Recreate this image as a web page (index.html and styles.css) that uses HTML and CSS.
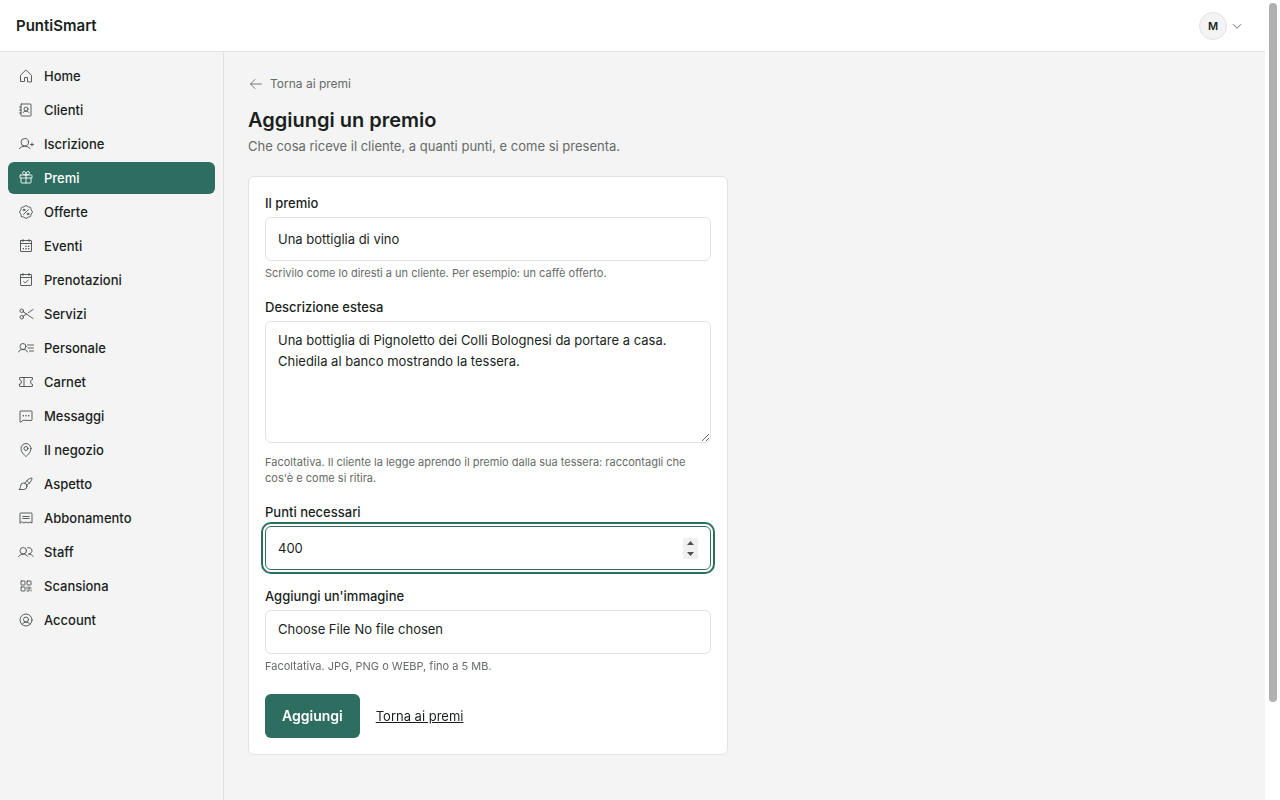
FILE: index.html
```html
<!DOCTYPE html>
<html lang="it">
<head>
	<meta charset="utf-8">
	<meta name="viewport" content="width=device-width, initial-scale=1">
	<title>Aggiungi un premio - PuntiSmart</title>
	<link rel="stylesheet" href="styles.css">
</head>
<body>
	<div class="page">
		<header class="topbar">
			<a href="#" class="brand">PuntiSmart</a>
			<button type="button" class="account-menu" aria-label="Menu account">
				<span class="avatar">M</span>
				<svg class="caret" viewBox="0 0 256 256"><path d="M208 96l-80 80-80-80"/></svg>
			</button>
		</header>

		<div class="shell">
			<nav class="sidebar">
				<a href="#" class="nav-item">
					<svg class="icon" viewBox="0 0 256 256"><path d="M152 216v-64h-48v64H40v-96a8 8 0 0 1 2.34-5.66l80-80a8 8 0 0 1 11.32 0l80 80A8 8 0 0 1 216 120v96Z"/></svg>
					Home
				</a>
				<a href="#" class="nav-item">
					<svg class="icon" viewBox="0 0 256 256"><rect x="48" y="32" width="160" height="192" rx="8"/><circle cx="128" cy="112" r="32"/><path d="M80 168a60 60 0 0 1 96 0M24 80h24M24 128h24M24 176h24"/></svg>
					Clienti
				</a>
				<a href="#" class="nav-item">
					<svg class="icon" viewBox="0 0 256 256"><circle cx="108" cy="100" r="60"/><path d="M22.2 200a112 112 0 0 1 171.6 0M200 136h48M224 112v48"/></svg>
					Iscrizione
				</a>
				<a href="#" class="nav-item active" aria-current="page">
					<svg class="icon" viewBox="0 0 256 256"><rect x="32" y="80" width="192" height="48" rx="8"/><path d="M208 128v72a8 8 0 0 1-8 8H56a8 8 0 0 1-8-8v-72M128 80v128M176.79 31.21c9.34 9.34 9.89 25.06 0 33.82C159.88 80 128 80 128 80s0-31.88 15-48.79c8.73-9.89 24.45-9.34 33.79 0ZM79.21 31.21c-9.34 9.34-9.89 25.06 0 33.82C96.12 80 128 80 128 80s0-31.88-15-48.79c-8.73-9.89-24.45-9.34-33.79 0Z"/></svg>
					Premi
				</a>
				<a href="#" class="nav-item">
					<svg class="icon" viewBox="0 0 256 256"><path d="M54.46 201.54c-9.2-9.2-3.1-28.53-7.78-39.85C41.82 150 24 140.5 24 128s17.82-22 22.68-33.69C51.36 83 45.26 63.66 54.46 54.46S83 51.36 94.31 46.68C106.05 41.82 115.5 24 128 24s22 17.82 33.69 22.68c11.32 4.68 30.65-1.42 39.85 7.78s3.1 28.53 7.78 39.85C214.18 106.05 232 115.5 232 128s-17.82 22-22.68 33.69c-4.68 11.32 1.42 30.65-7.78 39.85s-28.53 3.1-39.85 7.78C150 214.18 140.5 232 128 232s-22-17.82-33.69-22.68C83 204.64 63.66 210.74 54.46 201.54ZM88 168l80-80"/><circle cx="96" cy="96" r="14"/><circle cx="160" cy="160" r="14"/></svg>
					Offerte
				</a>
				<a href="#" class="nav-item">
					<svg class="icon" viewBox="0 0 256 256"><rect x="40" y="40" width="176" height="176" rx="8"/><path d="M176 24v32M80 24v32M40 88h176"/><g class="dots"><circle cx="128" cy="132" r="12"/><circle cx="172" cy="132" r="12"/><circle cx="84" cy="172" r="12"/><circle cx="128" cy="172" r="12"/><circle cx="172" cy="172" r="12"/></g></svg>
					Eventi
				</a>
				<a href="#" class="nav-item">
					<svg class="icon" viewBox="0 0 256 256"><rect x="40" y="40" width="176" height="176" rx="8"/><path d="M176 24v32M80 24v32M40 88h176M92 152l24 24 48-48"/></svg>
					Prenotazioni
				</a>
				<a href="#" class="nav-item">
					<svg class="icon" viewBox="0 0 256 256"><circle cx="60" cy="76" r="28"/><circle cx="60" cy="180" r="28"/><path d="M83 92l157 108M83 164l53-36M164 108l76-52"/></svg>
					Servizi
				</a>
				<a href="#" class="nav-item">
					<svg class="icon" viewBox="0 0 256 256"><circle cx="80" cy="104" r="48"/><path d="M8 192c8-24 36-40 72-40s64 16 72 40M152 80h96M160 128h88M184 176h64"/></svg>
					Personale
				</a>
				<a href="#" class="nav-item">
					<svg class="icon" viewBox="0 0 256 256"><path d="M24 167.2V192a8 8 0 0 0 8 8h192a8 8 0 0 0 8-8v-24.8a40 40 0 0 1 0-78.4V64a8 8 0 0 0-8-8H32a8 8 0 0 0-8 8v24.8a40 40 0 0 1 0 78.4ZM96 56v144"/></svg>
					Carnet
				</a>
				<a href="#" class="nav-item">
					<svg class="icon" viewBox="0 0 256 256"><path d="M75 200l-30 26a8 8 0 0 1-13-6V56a8 8 0 0 1 8-8h176a8 8 0 0 1 8 8v136a8 8 0 0 1-8 8Z"/><g class="dots"><circle cx="84" cy="124" r="12"/><circle cx="128" cy="124" r="12"/><circle cx="172" cy="124" r="12"/></g></svg>
					Messaggi
				</a>
				<a href="#" class="nav-item">
					<svg class="icon" viewBox="0 0 256 256"><circle cx="128" cy="104" r="32"/><path d="M208 104c0 72-80 128-80 128S48 176 48 104a80 80 0 0 1 160 0Z"/></svg>
					Il negozio
				</a>
				<a href="#" class="nav-item">
					<svg class="icon" viewBox="0 0 256 256"><path d="M144 164a52 52 0 0 1-52 52H16s24-16 24-52a52 52 0 0 1 104 0ZM108 115C136 72 184 32 216 32c8 0 8 0 8 8 0 32-40 80-83 108M142 76c18 8 30 20 38 38"/></svg>
					Aspetto
				</a>
				<a href="#" class="nav-item">
					<svg class="icon" viewBox="0 0 256 256"><path d="M32 208V56a8 8 0 0 1 8-8h176a8 8 0 0 1 8 8v152l-32-16-32 16-32-16-32 16-32-16ZM76 104h104M76 136h104"/></svg>
					Abbonamento
				</a>
				<a href="#" class="nav-item">
					<svg class="icon" viewBox="0 0 256 256"><circle cx="84" cy="108" r="52"/><path d="M10.23 200a88 88 0 0 1 147.54 0M172 160a87.93 87.93 0 0 1 73.77 40M152.69 59.7A52 52 0 1 1 172 160"/></svg>
					Staff
				</a>
				<a href="#" class="nav-item">
					<svg class="icon" viewBox="0 0 256 256"><rect x="48" y="48" width="64" height="64" rx="8"/><rect x="48" y="144" width="64" height="64" rx="8"/><rect x="144" y="48" width="64" height="64" rx="8"/><path d="M144 144v32M144 208h32v-64M176 160h32M208 192v16"/></svg>
					Scansiona
				</a>
				<a href="#" class="nav-item">
					<svg class="icon" viewBox="0 0 256 256"><circle cx="128" cy="128" r="96"/><circle cx="128" cy="120" r="40"/><path d="M63.8 199.37a72 72 0 0 1 128.4 0"/></svg>
					Account
				</a>
			</nav>

			<main class="content">
				<a href="#" class="back">
					<svg class="icon" viewBox="0 0 256 256"><path d="M216 128H40M112 56l-72 72 72 72"/></svg>
					Torna ai premi
				</a>
				<h1>Aggiungi un premio</h1>
				<p class="lead">Che cosa riceve il cliente, a quanti punti, e come si presenta.</p>

				<form class="card">
					<div class="field">
						<label for="premio">Il premio</label>
						<input type="text" id="premio" name="premio" value="Una bottiglia di vino">
						<p class="hint">Scrivilo come lo diresti a un cliente. Per esempio: un caffè offerto.</p>
					</div>
					<div class="field">
						<label for="descrizione">Descrizione estesa</label>
						<textarea id="descrizione" name="descrizione">Una bottiglia di Pignoletto dei Colli Bolognesi da portare a casa. Chiedila al banco mostrando la tessera.</textarea>
						<p class="hint">Facoltativa. Il cliente la legge aprendo il premio dalla sua tessera: raccontagli che cos'è e come si ritira.</p>
					</div>
					<div class="field">
						<label for="punti">Punti necessari</label>
						<input type="number" id="punti" name="punti" value="400" autofocus>
					</div>
					<div class="field">
						<label for="immagine">Aggiungi un'immagine</label>
						<input type="file" id="immagine" name="immagine" accept=".jpg,.png,.webp">
						<p class="hint">Facoltativa. JPG, PNG o WEBP, fino a 5 MB.</p>
					</div>
					<div class="actions">
						<button type="submit" class="btn">Aggiungi</button>
						<a href="#" class="cancel">Torna ai premi</a>
					</div>
				</form>
			</main>
		</div>
	</div>
	<div class="scrollbar" aria-hidden="true">
		<div class="thumb"></div>
	</div>
</body>
</html>
```
FILE: styles.css
```css
* {
	box-sizing: border-box;
}
body {
	display: flex;
	height: 100vh;
	margin: 0;
	font-family: Inter, sans-serif;
	font-size: 13px;
	line-height: 20px;
	color: #1a1f1d;
	background: #f4f4f4;
}
a {
	color: inherit;
	text-decoration: none;
}
.page {
	flex: 1;
	overflow-y: auto;
	scrollbar-width: none;
}
.scrollbar {
	width: 15px;
	padding: 3px 3px 3px 4px;
	background: #fff;
}
.thumb {
	height: 88%;
	border-radius: 4px;
	background: #b1afb0;
}
.topbar {
	display: flex;
	align-items: center;
	justify-content: space-between;
	height: 52px;
	padding: 0 22px 0 16px;
	background: #fff;
	border-bottom: 1px solid #e2e2e2;
}
.brand {
	font-size: 15px;
	font-weight: 600;
}
.account-menu {
	display: flex;
	align-items: center;
	gap: 4px;
	padding: 0;
	border: none;
	background: none;
	font: inherit;
	color: inherit;
}
.avatar {
	width: 28px;
	height: 28px;
	border: 1px solid #e2e2e2;
	border-radius: 50%;
	background: #f4f4f4;
	font-size: 11px;
	font-weight: 600;
	line-height: 26px;
	text-align: center;
}
.icon, .caret {
	width: 16px;
	height: 16px;
	flex: none;
	fill: none;
	stroke: currentColor;
	stroke-width: 14;
	stroke-linecap: round;
	stroke-linejoin: round;
}
.caret {
	width: 12px;
	height: 12px;
	stroke-width: 20;
	color: #5f6462;
}
.dots {
	fill: currentColor;
	stroke: none;
}
.shell {
	display: flex;
	min-height: 864px;
}
.sidebar {
	display: flex;
	flex-direction: column;
	gap: 2px;
	width: 224px;
	flex: none;
	padding: 8px;
	border-right: 1px solid #e2e2e2;
}
.nav-item {
	display: flex;
	align-items: center;
	gap: 10px;
	height: 32px;
	padding: 0 10px;
	border-radius: 6px;
	font-weight: 500;
}
.nav-item .icon {
	color: #444947;
}
.active {
	background: #2d6e60;
	color: #fff;
}
.active .icon {
	color: #fff;
}
.content {
	flex: 1;
	padding: 24px;
}
.back {
	display: flex;
	align-items: center;
	gap: 6px;
	width: fit-content;
	height: 16px;
	font-size: 12px;
	color: #666a68;
}
h1 {
	margin: 14px 0 0;
	font-size: 20px;
	font-weight: 600;
	line-height: 28px;
}
.lead {
	margin: 2px 0 20px;
	color: #666a68;
}
.card {
	max-width: 480px;
	padding: 16px;
	border: 1px solid #e2e2e2;
	border-radius: 6px;
	background: #fff;
}
.field {
	margin-bottom: 16px;
}
.field label {
	display: block;
	margin-bottom: 4px;
	font-weight: 500;
}
.field input, .field textarea {
	display: block;
	width: 100%;
	height: 44px;
	padding: 8px 12px;
	border: 1px solid #e2e2e2;
	border-radius: 6px;
	background: #fff;
	font: inherit;
	line-height: 21px;
	color: inherit;
}
.field textarea {
	height: 122px;
	margin-bottom: 11px;
	resize: vertical;
}
.field input:focus {
	border-color: #2d6e60;
	outline: 2px solid #2d6e60;
	outline-offset: 2px;
}
.field input[type="number"]::-webkit-inner-spin-button {
	-webkit-appearance: none;
	width: 15px;
	height: 21px;
	background: #f0f0f0 url("data:image/svg+xml,%3Csvg xmlns='http://www.w3.org/2000/svg' width='15' height='21'%3E%3Cpath fill='%23505050' d='M4 7h7L7.500 3zM4 14h7l-3.500 4z'/%3E%3C/svg%3E") no-repeat center;
	opacity: 1;
}
.field input::file-selector-button {
	margin: 0 4px 0 0;
	padding: 0;
	border: none;
	background: none;
	font: inherit;
	color: inherit;
}
.hint {
	margin: 4px 0 0;
	font-size: 11px;
	line-height: 16px;
	color: #666a68;
}
.actions {
	display: flex;
	align-items: center;
	gap: 16px;
	margin-top: 20px;
}
.btn {
	height: 44px;
	padding: 0 17px;
	border: none;
	border-radius: 6px;
	background: #2d6e60;
	color: #fff;
	font: inherit;
	font-size: 14px;
	font-weight: 600;
}
.cancel {
	text-decoration: underline;
}
```
